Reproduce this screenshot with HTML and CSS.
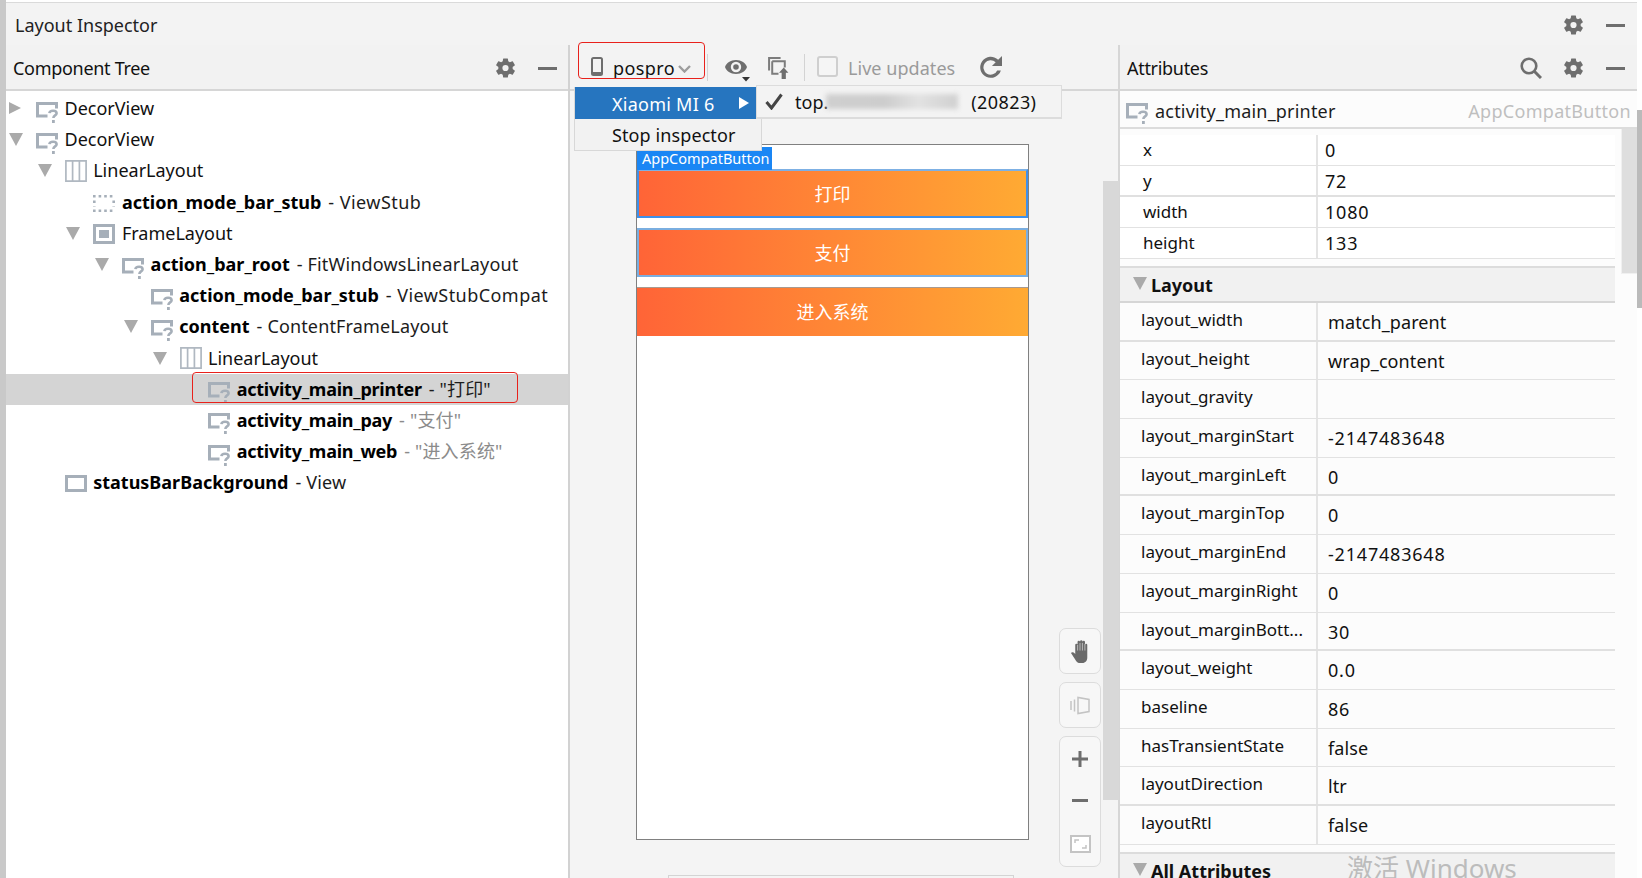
FILE: index.html
```html
<!DOCTYPE html>
<html lang="en">
<head>
<meta charset="utf-8">
<title>Layout Inspector</title>
<link rel="stylesheet" href="styles.css">
</head>
<body>
<svg class="defs" width="0" height="0" aria-hidden="true">
  <symbol id="i-gear" viewBox="2.5 2 19 20"><path fill="currentColor" d="M19.14 12.94c.04-.3.06-.61.06-.94 0-.32-.02-.64-.07-.94l2.03-1.58a.49.49 0 0 0 .12-.61l-1.92-3.32a.49.49 0 0 0-.59-.22l-2.39.96a7.03 7.03 0 0 0-1.62-.94l-.36-2.54a.48.48 0 0 0-.48-.41h-3.84a.48.48 0 0 0-.47.41l-.36 2.54c-.59.24-1.13.57-1.62.94l-2.39-.96a.49.49 0 0 0-.59.22L2.74 8.87a.48.48 0 0 0 .12.61l2.03 1.58c-.05.3-.09.63-.09.94s.02.64.07.94l-2.03 1.58a.49.49 0 0 0-.12.61l1.92 3.32c.12.22.37.29.59.22l2.39-.96c.5.38 1.03.7 1.62.94l.36 2.54c.05.24.24.41.48.41h3.84c.24 0 .44-.17.47-.41l.36-2.54c.59-.24 1.13-.56 1.62-.94l2.39.96c.22.08.47 0 .59-.22l1.92-3.32a.48.48 0 0 0-.12-.61l-2.01-1.58zM12 15.1A3.1 3.1 0 1 1 12 8.900a3.1 3.1 0 0 1 0 6.200z"/></symbol>
  <symbol id="i-view" viewBox="0 0 22 21"><path fill="none" stroke="#a6afb9" stroke-width="3" d="M20.500 6.500V1.500H1.500v12.500h10"/><path fill="none" stroke="#a6afb9" stroke-width="2.600" d="M13.400 11.200c.4-3.400 7.200-3.200 7.200 0 0 2.500-3.200 2-3.200 4.800"/><rect x="16" y="18" width="2.800" height="3" fill="#a6afb9"/></symbol>
  <symbol id="i-linear" viewBox="0 0 22 22"><path fill="none" stroke="#b0b8c1" stroke-width="1.700" d="M.9.9h20.200v20.200H.9zM7.600.9v20.200M14.400.9v20.200"/></symbol>
  <symbol id="i-frame" viewBox="0 0 22 20"><path fill="none" stroke="#a6afb9" stroke-width="3" d="M1.500 1.500h19v17h-19z"/><rect x="6" y="6" width="10" height="8" fill="#a6afb9"/></symbol>
  <symbol id="i-stub" viewBox="0 0 22 17"><path fill="none" stroke="#a6afb9" stroke-width="2.600" stroke-dasharray="2.600 3" d="M0 1.300h22M0 15.700h22M1.300 5.500v6M20.700 5.500v6"/></symbol>
  <symbol id="i-bar" viewBox="0 0 22 17"><path fill="none" stroke="#a6afb9" stroke-width="3" d="M1.500 1.500h19v14h-19z"/></symbol>
</svg>

<div class="app">
  <div class="stripe"></div>
  <div class="main">
    <div class="titlebar">
      <span class="title">Layout Inspector</span>
      <span class="actions">
        <svg class="gear"><use href="#i-gear"/></svg>
        <span class="minus"></span>
      </span>
    </div>

    <div class="panels">
      <section class="tree-panel">
        <header class="panel-head">
          <span class="panel-title">Component Tree</span>
          <span class="actions tree-actions">
            <svg class="gear"><use href="#i-gear"/></svg>
            <span class="minus"></span>
          </span>
        </header>
        <div class="tree">
          <div class="row l0"><span class="slot"><i class="arr-right"></i></span><svg class="ic"><use href="#i-view"/></svg><span>DecorView</span></div>
          <div class="row l0"><span class="slot"><i class="arr-down"></i></span><svg class="ic"><use href="#i-view"/></svg><span>DecorView</span></div>
          <div class="row l1"><span class="slot"><i class="arr-down"></i></span><svg class="ic ic-tall"><use href="#i-linear"/></svg><span>LinearLayout</span></div>
          <div class="row l2"><span class="slot"></span><svg class="ic ic-low"><use href="#i-stub"/></svg><b>action_mode_bar_stub</b><span class="dash wide">- ViewStub</span></div>
          <div class="row l2"><span class="slot"><i class="arr-down"></i></span><svg class="ic ic-frame"><use href="#i-frame"/></svg><span>FrameLayout</span></div>
          <div class="row l3"><span class="slot"><i class="arr-down"></i></span><svg class="ic"><use href="#i-view"/></svg><b>action_bar_root</b><span class="dash">- FitWindowsLinearLayout</span></div>
          <div class="row l4"><span class="slot"></span><svg class="ic"><use href="#i-view"/></svg><b>action_mode_bar_stub</b><span class="dash wide">- ViewStubCompat</span></div>
          <div class="row l4"><span class="slot"><i class="arr-down"></i></span><svg class="ic"><use href="#i-view"/></svg><b>content</b><span class="dash">- ContentFrameLayout</span></div>
          <div class="row l5"><span class="slot"><i class="arr-down"></i></span><svg class="ic ic-tall"><use href="#i-linear"/></svg><span>LinearLayout</span></div>
          <div class="row l6 selected"><span class="slot"></span><svg class="ic"><use href="#i-view"/></svg><b>activity_main_printer</b><span class="dash">- "打印"</span><span class="red-note row-note"></span></div>
          <div class="row l6"><span class="slot"></span><svg class="ic"><use href="#i-view"/></svg><b>activity_main_pay</b><span class="dash muted">- "支付"</span></div>
          <div class="row l6"><span class="slot"></span><svg class="ic"><use href="#i-view"/></svg><b>activity_main_web</b><span class="dash muted">- "进入系统"</span></div>
          <div class="row l1"><span class="slot"></span><svg class="ic ic-bar"><use href="#i-bar"/></svg><b>statusBarBackground</b><span class="dash">- View</span></div>
        </div>
      </section>

      <section class="center-panel">
        <header class="toolbar">
          <span class="red-note bar-note"></span>
          <svg class="phone" viewBox="0 0 12 19"><rect x="1" y="1" width="10" height="17" rx="1.500" fill="none" stroke="#6e6e6e" stroke-width="2"/><rect x="2" y="15" width="8" height="2.400" fill="#6e6e6e"/></svg>
          <span class="app-name">pospro</span>
          <svg class="chevron" viewBox="0 0 13 8"><path d="M1 1l5.500 5.500L12 1" fill="none" stroke="#9c9c9c" stroke-width="2.400"/></svg>
          <span class="sep sep-a"></span>
          <svg class="eye" viewBox="0 0 26 24"><path fill="#6e6e6e" d="M12 2C6.500 2 2.300 5.200 1 9c1.300 3.800 5.500 7 11 7s9.700-3.200 11-7c-1.300-3.800-5.500-7-11-7zm0 12.200a5.200 5.200 0 1 1 0-10.400 5.200 5.200 0 0 1 0 10.400zM12 6.200a2.800 2.800 0 1 0 0 5.600 2.800 2.800 0 0 0 0-5.600z"/><path fill="#333" d="M18 19h8l-4 4.500z"/></svg>
          <svg class="copy" viewBox="0 0 20 21"><path fill="none" stroke="#7c7c7c" stroke-width="1.900" d="M1 13V1h11M4 4h12v6M4 4v12h6"/><path fill="#6e6e6e" d="M15 10l4.500 5H17v6h-4v-6h-2.500z"/></svg>
          <span class="sep sep-b"></span>
          <span class="checkbox"></span>
          <span class="live">Live updates</span>
          <svg class="refresh" viewBox="0 0 24 24"><path fill="#6e6e6e" d="M24 0v10.500H13.500l3.900-3.900A7.500 7.500 0 1 0 19 15h3.800A11 11 0 1 1 20 4z"/></svg>
        </header>

        <div class="menu">
          <div class="menu-item active">Xiaomi MI 6<i class="menu-arrow"></i></div>
          <div class="menu-item">Stop inspector</div>
        </div>
        <div class="submenu">
          <svg class="check" viewBox="0 0 18 17"><path d="M1.500 9l5 6L16.500 1.500" fill="none" stroke="#444" stroke-width="3"/></svg>
          <span>top.</span><span class="smear"></span><span class="pid">(20823)</span>
        </div>

        <div class="stage">
          <div class="device">
            <span class="device-label">AppCompatButton</span>
            <div class="screen-btn first">打印</div>
            <div class="screen-btn second">支付</div>
            <div class="screen-btn third">进入系统</div>
          </div>
          <div class="tools">
            <div class="tool-card tool-one">
              <svg class="hand" viewBox="0 0 22 24"><path fill="#6a6a6a" d="M1 13.500c1.200-1.500 3-.8 4.500 1V5a1.300 1.300 0 0 1 2.400-.5V2a1.300 1.300 0 0 1 2.600 0v-.6a1.300 1.300 0 0 1 2.600 0V2a1.300 1.300 0 0 1 2.600 0v3a1.200 1.200 0 0 1 2.400 0v13.500c0 3-2 5.500-5 5.500H9.500c-3 0-5-6-8.500-10.500z"/><path stroke="#f7f7f7" stroke-width=".6" d="M8 5v6M10.500 3v8M13 3v8M15.600 4v7"/></svg>
            </div>
            <div class="tool-card tool-one">
              <svg class="layers" viewBox="0 0 20 19"><path fill="none" stroke="#c4c4c4" stroke-width="1.500" d="M8 1.500v16l11-2V3.500zM4.500 3.500v12M1 5v9"/></svg>
            </div>
            <div class="tool-card tool-zoom">
              <svg class="plus" viewBox="0 0 16 16"><path d="M8 0v16M0 8h16" stroke="#6e6e6e" stroke-width="3"/></svg>
              <span class="zoom-minus"></span>
              <svg class="fit" viewBox="0 0 21 18"><path fill="#fff" stroke="#c4c4c4" stroke-width="2" d="M1 1h19v16H1z"/><path fill="none" stroke="#c4c4c4" stroke-width="1.500" d="M5 8V5h4M16 10v3h-4"/></svg>
            </div>
          </div>
          <div class="vscroll"></div>
          <div class="hscroll"></div>
        </div>
      </section>

      <section class="attr-panel">
        <header class="panel-head">
          <span class="panel-title attr-title">Attributes</span>
          <span class="actions attr-actions">
            <svg class="search" viewBox="0 0 22 22"><circle cx="9" cy="9" r="7.300" fill="none" stroke="#6e6e6e" stroke-width="2.600"/><path d="M14.500 14.500L21 21" stroke="#6e6e6e" stroke-width="3"/></svg>
            <svg class="gear"><use href="#i-gear"/></svg>
            <span class="minus"></span>
          </span>
        </header>
        <div class="selected-head">
          <svg class="ic"><use href="#i-view"/></svg>
          <span class="sel-name">activity_main_printer</span>
          <span class="sel-type">AppCompatButton</span>
        </div>
        <div class="attr-body">
          <div class="attr-table">
            <div class="short-rows">
              <div class="attr short"><span class="k">x</span><span class="v n">0</span></div>
              <div class="attr short thick"><span class="k">y</span><span class="v n">72</span></div>
              <div class="attr short"><span class="k">width</span><span class="v n">1080</span></div>
              <div class="attr short"><span class="k">height</span><span class="v n">133</span></div>
            </div>
            <div class="section"><i class="arr-down"></i><b>Layout</b></div>
            <div class="attr thick"><span class="k">layout_width</span><span class="v">match_parent</span></div>
            <div class="attr"><span class="k">layout_height</span><span class="v">wrap_content</span></div>
            <div class="attr"><span class="k">layout_gravity</span><span class="v"></span></div>
            <div class="attr"><span class="k">layout_marginStart</span><span class="v n">-2147483648</span></div>
            <div class="attr thick"><span class="k">layout_marginLeft</span><span class="v n">0</span></div>
            <div class="attr"><span class="k">layout_marginTop</span><span class="v n">0</span></div>
            <div class="attr"><span class="k">layout_marginEnd</span><span class="v n">-2147483648</span></div>
            <div class="attr"><span class="k">layout_marginRight</span><span class="v n">0</span></div>
            <div class="attr thick"><span class="k">layout_marginBott...</span><span class="v n">30</span></div>
            <div class="attr"><span class="k">layout_weight</span><span class="v n">0.0</span></div>
            <div class="attr"><span class="k">baseline</span><span class="v n">86</span></div>
            <div class="attr"><span class="k">hasTransientState</span><span class="v">false</span></div>
            <div class="attr thick"><span class="k">layoutDirection</span><span class="v">ltr</span></div>
            <div class="attr"><span class="k">layoutRtl</span><span class="v">false</span></div>
            <div class="section all"><i class="arr-down"></i><b>All Attributes</b></div>
          </div>
          <div class="attr-gutter"><div class="attr-thumb"></div></div>
          <span class="watermark">激活 Windows</span>
        </div>
      </section>
    </div>
  </div>
  <div class="edge"><div class="edge-thumb"></div></div>
</div>
</body>
</html>
```

FILE: styles.css
```css
* { box-sizing: border-box; }
html, body { margin: 0; padding: 0; }
body {
  width: 1642px;
  height: 878px;
  overflow: hidden;
  background: #fff;
  color: #111;
  font-family: "Noto Sans", "Noto Sans CJK SC", sans-serif;
  font-size: 18px;
  line-height: 24px;
}
.defs { position: absolute; }
.app { display: flex; height: 878px; }
.stripe { width: 6px; background: #c9c9c9; flex: none; }
.main { width: 1631px; flex: none; display: flex; flex-direction: column; }
.edge { width: 5px; flex: none; }
.edge-thumb { margin-top: 110px; height: 198px; background: #bababa; }

.titlebar {
  height: 43px;
  flex: none;
  display: flex;
  align-items: center;
  justify-content: space-between;
  margin-top: 2px;
  border-top: 1px solid #dadada;
  background: #f3f3f3;
  padding: 2px 12px 0 9px;
}
.title { color: #222; }
.actions { display: flex; align-items: center; }
.gear { width: 19px; height: 20px; color: #6e6e6e; display: block; }
.minus { width: 19px; height: 3px; background: #6e6e6e; margin-left: 23px; display: block; }

.panels { flex: 1; display: flex; min-height: 0; }
.panel-head {
  height: 46px;
  flex: none;
  display: flex;
  align-items: center;
  justify-content: space-between;
  background: #f2f2f2;
  border-bottom: 2px solid #d6d6d6;
}
.panel-title { color: #111; letter-spacing: -.3px; }

/* tree */
.tree-panel { width: 562px; flex: none; background: #fff; }
.tree-panel .panel-head { padding: 2px 11px 0 7px; }
.tree-actions .gear { margin-left: -1px; }
.tree { padding-top: 2px; }
.row {
  position: relative;
  height: 31.2px;
  display: flex;
  align-items: center;
  white-space: nowrap;
  padding-left: calc(2px + var(--l) * 28.7px);
  padding-bottom: 1px;
}
.l0 { --l: 0; } .l1 { --l: 1; } .l2 { --l: 2; } .l3 { --l: 3; }
.l4 { --l: 4; } .l5 { --l: 5; } .l6 { --l: 6; }
.slot { width: 28px; flex: none; display: flex; align-items: center; padding-left: 1px; }
.arr-right {
  width: 0; height: 0; display: block;
  border-left: 12px solid #aaa;
  border-top: 6.500px solid transparent;
  border-bottom: 6.500px solid transparent;
}
.arr-down {
  width: 0; height: 0; display: block;
  border-top: 13px solid #aaa;
  border-left: 7px solid transparent;
  border-right: 7px solid transparent;
  margin-top: 1px;
}
.ic { width: 22px; height: 21px; flex: none; margin-right: 6.500px; margin-top: 8px; display: block; }
.ic-tall { height: 22px; margin-top: 1px; }
.ic-low { height: 17px; margin-top: 3px; }
.ic-frame { height: 20px; margin-top: 2px; }
.ic-bar { height: 17px; margin-top: 3px; }
.row b { font-weight: 700; color: #000; }
.l6 b { letter-spacing: -.25px; }
.dash { margin-left: 7px; color: #1c1c1c; letter-spacing: .15px; }
.dash.wide { letter-spacing: .45px; }
.muted { color: #8b8b8b; }
.selected { background: #d4d4d4; }
.red-note { position: absolute; border: 1px solid #e8211b; border-radius: 4px; pointer-events: none; }
.row-note { left: 186px; top: -2px; width: 326px; height: 31px; }

/* center */
.center-panel {
  width: 550px;
  flex: none;
  position: relative;
  background: #f4f4f4;
  border-left: 2px solid #d2d2d2;
  display: flex;
  flex-direction: column;
}
.toolbar {
  height: 46px;
  flex: none;
  position: relative;
  display: flex;
  align-items: center;
  background: #f3f3f3;
  border-bottom: 2px solid #d6d6d6;
  padding: 0 0 4px 21px;
}
.bar-note { left: 8px; top: -3px; width: 127px; height: 37px; }
.phone { width: 12px; height: 19px; flex: none; margin-top: 3px; }
.app-name { margin-left: 10px; margin-top: 5px; color: #111; width: 60px; letter-spacing: .4px; }
.chevron { width: 13px; height: 8px; flex: none; margin-left: 5px; margin-top: 7px; }
.sep { width: 1px; height: 27px; background: #d3d3d3; flex: none; margin-top: 4px; }
.sep-a { margin-left: 16px; }
.eye { width: 26px; height: 24px; flex: none; margin-left: 16px; margin-top: 10px; }
.copy { width: 21px; height: 22px; flex: none; margin-left: 18px; margin-top: 6px; }
.sep-b { margin-left: 15px; }
.checkbox { width: 21px; height: 21px; flex: none; margin-left: 12px; margin-top: 2px; border: 2px solid #cfcfcf; border-radius: 3px; background: #f5f5f5; }
.live { margin-left: 10px; margin-top: 5px; color: #9a9a9a; width: 108px; white-space: nowrap; letter-spacing: .05px; }
.refresh { width: 23px; height: 23px; flex: none; margin-left: 23px; margin-top: 4px; }

.menu {
  position: absolute;
  left: 4px;
  top: 42px;
  width: 188px;
  height: 64px;
  background: #f2f2f2;
  border: 1px solid #d8d8d8;
  border-top: 0;
  z-index: 3;
}
.menu-item { height: 32px; line-height: 33px; padding-left: 37px; color: #111; position: relative; white-space: nowrap; letter-spacing: .1px; }
.menu-item.active { background: #2675bf; color: #fff; width: 183px; letter-spacing: .25px; line-height: 34px; }
.menu-arrow {
  position: absolute;
  left: 164px;
  top: 10px;
  width: 0; height: 0;
  border-left: 10px solid #fff;
  border-top: 6px solid transparent;
  border-bottom: 6px solid transparent;
}
.submenu {
  position: absolute;
  left: 186px;
  top: 40px;
  width: 306px;
  height: 34px;
  background: #f3f3f3;
  border: 1px solid #dcdcdc;
  border-bottom-width: 2px;
  z-index: 3;
  display: flex;
  align-items: center;
  padding-left: 8px;
  white-space: nowrap;
  color: #111;
}
.check { width: 18px; height: 17px; margin-right: 12px; flex: none; }
.smear {
  width: 132px;
  height: 15px;
  margin-left: -2px;
  margin-right: 13px;
  background: linear-gradient(90deg, #cfcfcf, #cdcdcd 45%, #e2e2e2 70%, #d0d0d0);
  filter: blur(2.500px);
  flex: none;
}
.pid { letter-spacing: .4px; }

.stage { flex: 1; display: flex; position: relative; min-height: 0; }
.device {
  position: relative;
  width: 393px;
  height: 696px;
  flex: none;
  margin-left: 66px;
  margin-top: 53px;
  background: #fff;
  border: 1px solid #808080;
  padding-top: 24px;
  display: flex;
  flex-direction: column;
  gap: 10px;
}
.device-label {
  position: absolute;
  left: 0;
  top: 2px;
  width: 135px;
  height: 23px;
  background: #1a86f4;
  color: #fff;
  font-size: 14.500px;
  line-height: 22px;
  padding-left: 5px;
  white-space: nowrap;
}
.screen-btn {
  height: 49px;
  flex: none;
  display: flex;
  align-items: center;
  justify-content: center;
  color: #fff;
  font-size: 18px;
  background: linear-gradient(90deg, #ff6437, #ffaa33);
}
.first { border: 2px solid #3f90ea; border-top-color: #7db0e4; }
.second { border: 2px solid #7aaee0; }
.third { border-top: 1px solid #a89a90; height: 49px; }

.tools {
  width: 42px;
  flex: none;
  margin-left: 30px;
  margin-top: 537px;
  display: flex;
  flex-direction: column;
  gap: 8px;
}
.tool-card {
  border: 1.500px solid #dcdcdc;
  border-radius: 7px;
  background: #f7f7f7;
  display: flex;
  flex-direction: column;
  align-items: center;
}
.tool-one { height: 46px; flex: none; justify-content: center; }
.tool-zoom { height: 131px; flex: none; padding-top: 14px; }
.hand { width: 21px; height: 23px; }
.layers { width: 20px; height: 19px; }
.plus { width: 16px; height: 16px; flex: none; }
.zoom-minus { width: 16px; height: 3px; background: #6e6e6e; margin-top: 32px; flex: none; }
.fit { width: 21px; height: 18px; margin-top: 33px; flex: none; }
.vscroll { width: 16px; height: 619px; flex: none; margin-left: 2px; margin-top: 90px; background: #d8d8d8; }
.hscroll {
  position: absolute;
  left: 98px;
  top: 784px;
  width: 346px;
  height: 10px;
  border: 1px solid #d4d4d4;
}

/* attributes */
.attr-panel {
  width: 519px;
  flex: none;
  background: #fcfcfc;
  border-left: 2px solid #d6d6d6;
  display: flex;
  flex-direction: column;
}
.attr-panel .panel-head { padding: 2px 12px 0 7px; }
.search { width: 22px; height: 22px; margin-right: 22px; }
.selected-head {
  height: 38px;
  flex: none;
  display: flex;
  align-items: center;
  padding: 4px 6px 0 6px;
  border-bottom: 2px solid #dcdcdc;
}
.selected-head .ic { margin-right: 7px; margin-top: 4px; }
.sel-name { color: #1c1c1c; letter-spacing: .2px; }
.sel-type { margin-left: auto; color: #bfbfbf; letter-spacing: .3px; }
.attr-body { flex: 1; display: flex; position: relative; min-height: 0; overflow: hidden; }
.attr-table { width: 495px; flex: none; padding-top: 6px; }
.short-rows { background: #fff; }
.attr { height: 38.700px; display: flex; border-bottom: 1px solid #e2e2e2; overflow: hidden; }
.attr.short { height: 31px; }
.attr.thick { border-bottom: 2px solid #e0e0e0; }
.k {
  width: 198px;
  flex: none;
  padding-left: 21px;
  padding-top: 5px;
  border-right: 2px solid #e4e4e4;
  color: #111;
  font-size: 17px;
  white-space: nowrap;
}
.v { padding-left: 10px; padding-top: 7px; color: #111; letter-spacing: .1px; }
.v.n { letter-spacing: .8px; }
.short .k { padding-left: 23px; padding-top: 3px; }
.short .v { padding-left: 7px; padding-top: 3px; }
.section {
  height: 37px;
  margin-top: 7px;
  display: flex;
  align-items: center;
  background: #f1f1f1;
  border-top: 2px solid #dcdcdc;
  border-bottom: 2px solid #d6d6d6;
  padding-left: 13px;
}
.section .arr-down { margin-right: 4px; margin-top: -3px; }
.section.all { margin-top: 7px; border-bottom: 0; }
.attr-gutter { flex: 1; padding-left: 6px; }
.attr-thumb { width: 17px; height: 145px; background: #dedede; border: 1.500px solid #f0f0f0; border-top: 0; }
.watermark {
  position: absolute;
  left: 227px;
  bottom: -7px;
  font-size: 26px;
  line-height: 34px;
  color: #bcbcbc;
  white-space: nowrap;
}
```
